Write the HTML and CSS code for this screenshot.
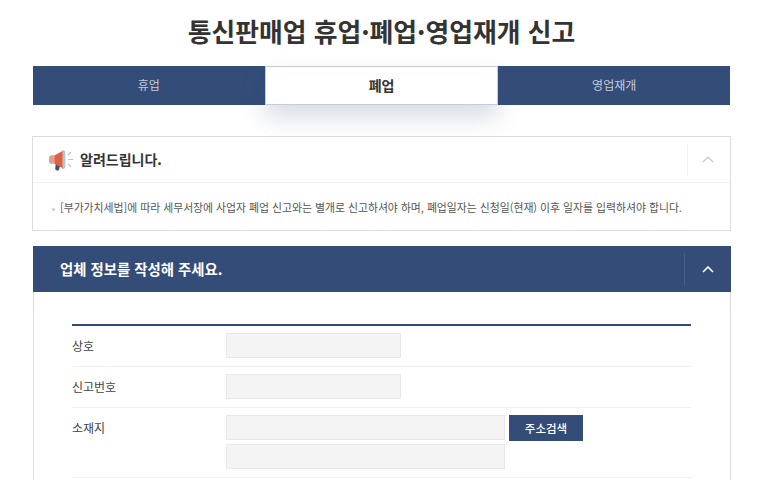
FILE: index.html
```html
<!DOCTYPE html>
<html lang="ko">
    <head>
        <meta charset="UTF-8">
        <title>통신판매업 휴업·폐업·영업재개 신고</title>
        <link rel="stylesheet" href="styles.css">
    </head>
    <body>
        <div class="wrap">
            <h1 class="title">통신판매업 휴업·폐업·영업재개 신고</h1>

            <ul class="tabs">
                <li>휴업</li>
                <li class="on">폐업</li>
                <li>영업재개</li>
            </ul>

            <div class="notice">
                <div class="notice-head">
                    <svg class="notice-icon" width="25" height="24" viewBox="0 0 26 24">
                        <path d="M7 15l5 1-1.500 6q-.5 1.500-2.200 1t-1.800-2z" fill="#3d5573"/>
                        <rect x="0" y="7" width="8" height="9" rx="3" fill="#dd9f8e"/>
                        <path d="M6 7l9-5v19l-9-5z" fill="#e2603f"/>
                        <path d="M14 1.500q2.500 0 3 3v14q-.5 3-3 3z" fill="#b9c2cc"/>
                        <path d="M20 11.500h5M19.500 7l3.500-3M19.500 16l3.500 3" stroke="#b9c3cd" stroke-width="1.200" fill="none"/>
                    </svg>
                    <h2>알려드립니다.</h2>
                    <span class="toggle">
                        <svg width="12" height="7" viewBox="0 0 12 7"><path d="M1 6l5-5 5 5" stroke="#c4c4c4" stroke-width="1.200" fill="none"/></svg>
                    </span>
                </div>
                <p class="notice-body"><span class="dot"></span>[부가가치세법]에 따라 세무서장에 사업자 폐업 신고와는 별개로 신고하셔야 하며, 폐업일자는 신청일(현재) 이후 일자를 입력하셔야 합니다.</p>
            </div>

            <div class="panel">
                <div class="panel-head">
                    <h2>업체 정보를 작성해 주세요.</h2>
                    <span class="toggle">
                        <svg width="12" height="7" viewBox="0 0 12 7"><path d="M1 6l5-5 5 5" stroke="#fff" stroke-width="1.600" fill="none"/></svg>
                    </span>
                </div>
                <div class="panel-body">
                    <div class="form">
                        <div class="row">
                            <label>상호</label>
                            <div class="fields"><input class="short" type="text" disabled></div>
                        </div>
                        <div class="row">
                            <label>신고번호</label>
                            <div class="fields"><input class="short" type="text" disabled></div>
                        </div>
                        <div class="row">
                            <label>소재지</label>
                            <div class="fields">
                                <div class="line">
                                    <input class="long" type="text" disabled>
                                    <button type="button">주소검색</button>
                                </div>
                                <input class="long" type="text" disabled>
                            </div>
                        </div>
                    </div>
                </div>
            </div>
        </div>
    </body>
</html>
```

FILE: styles.css
```css
*{ margin:0; padding:0; box-sizing:border-box; font-family:"Noto Sans CJK KR","Noto Sans",sans-serif;}
html,body{
    height: 480px;
    overflow: hidden;
    background: #fff;
}
.wrap{
    width: 699px;
    margin-left: 32px;
}
.title{
    height: 66px;
    line-height: 62px;
    text-align: center;
    font-size: 25.800px;
    font-weight: 700;
    color: #333;
}
.tabs{
    display: flex;
    height: 39px;
    margin: 0 1px 31px;
    list-style: none;
}
.tabs li{
    flex: 1;
    line-height: 37px;
    text-align: center;
    font-size: 12px;
    color: #c3cbd9;
    background: #344d78;
}
.tabs li.on{
    font-size: 14px;
    font-weight: 700;
    color: #333;
    background: #fff;
    border: 1px solid #c5cbdc;
    box-shadow: 0 12px 24px rgba(52,77,120,.2);
}
.notice{
    border: 1px solid #ddd;
    background: #fff;
    height: 95px;
    margin-bottom: 15px;
}
.notice-head{
    display: flex;
    align-items: center;
    height: 46px;
    padding-left: 16px;
    border-bottom: 1px solid #f2f2f2;
}
.notice-icon{
    margin-right: 6px;
}
.notice-head h2{
    flex: 1;
    padding-bottom: 2px;
    font-size: 14px;
    font-weight: 700;
    color: #333;
}
.toggle{
    display: flex;
    align-items: center;
    justify-content: center;
    width: 43px;
    height: 32px;
    padding-right: 2px;
    border-left: 1px solid #f2f2f2;
}
.notice-body{
    padding-top: 15px;
    padding-left: 19px;
    font-size: 10.850px;
    line-height: 18px;
    color: #555;
    white-space: nowrap;
}
.dot{
    display: inline-block;
    width: 3px;
    height: 3px;
    margin-right: 5px;
    vertical-align: middle;
    border-radius: 50%;
    background: #ccc;
}
.panel{
    margin-left: 1px;
}
.panel-head{
    display: flex;
    align-items: center;
    height: 46px;
    padding-left: 27px;
    background: #344d78;
}
.panel-head h2{
    flex: 1;
    padding-bottom: 2px;
    font-size: 14.400px;
    font-weight: 700;
    color: #fff;
}
.panel-head .toggle{
    width: 47px;
    padding-right: 0;
    border-left-color: #44608c;
}
.panel-body{
    height: 200px;
    padding: 32px 39px 0 38px;
    border: 1px solid #ddd;
    border-top: 0;
}
.form{
    border-top: 2px solid #344d78;
}
.row{
    display: flex;
    padding: 7px 0 8px;
    border-bottom: 1px solid #f0f0f0;
}
.row label{
    width: 154px;
    line-height: 25px;
    font-size: 12px;
    color: #444;
}
.fields{
    display: flex;
    flex-direction: column;
    gap: 3px;
}
.line{
    display: flex;
    gap: 4px;
}
input{
    display: block;
    height: 25px;
    background: #f4f4f4;
    border: 1px solid #e8e8e8;
}
.short{
    width: 175px;
}
.long{
    width: 279px;
}
button{
    width: 74px;
    height: 26px;
    font-size: 11.500px;
    font-weight: 500;
    color: #fff;
    background: #344d78;
    border: 0;
}
```
